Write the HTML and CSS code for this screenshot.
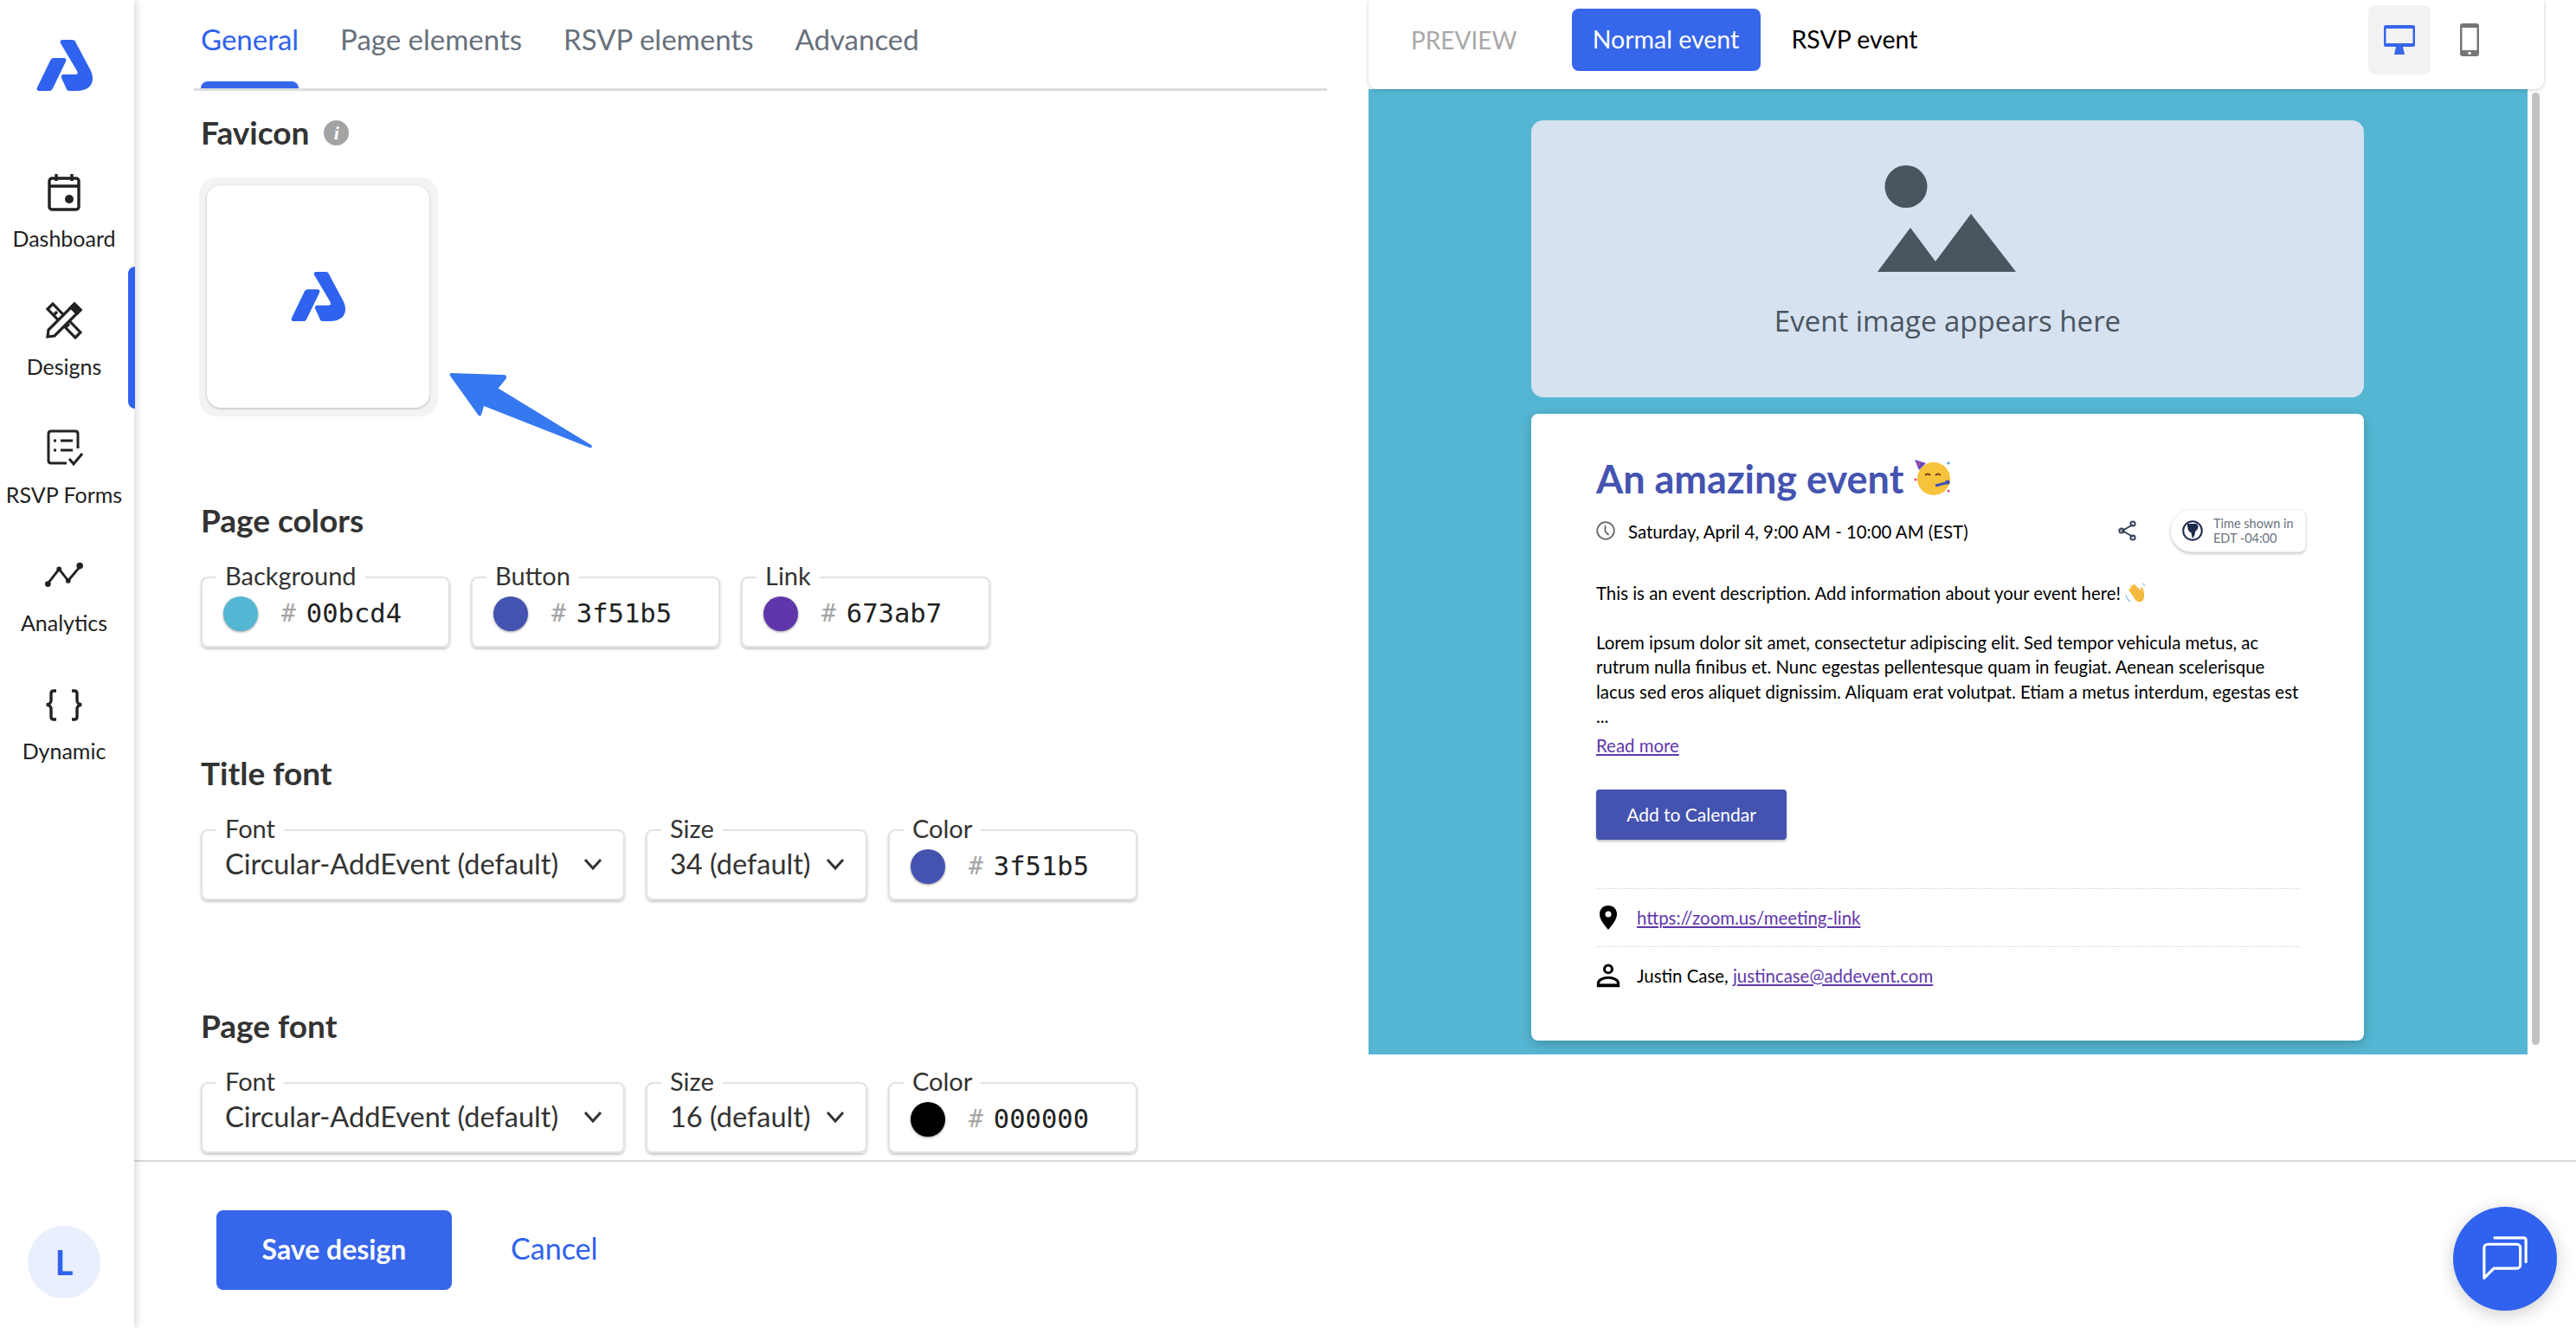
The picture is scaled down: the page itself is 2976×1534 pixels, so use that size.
FILE: index.html
```html
<!DOCTYPE html>
<html lang="en">
<head>
    <meta charset="UTF-8">
    <title>Designs</title>
    <link rel="stylesheet" href="styles.css">
</head>
<body>
    <svg class="defs" width="0" height="0">
        <symbol id="logo" viewBox="0 0 65 59">
            <path d="M20 21h11c3 0 4 1 3 4L19 56c-1 2-2 3-4 3H3c-2 0-3-2-2-4l15-31c1-2 2-3 4-3z"/>
            <path d="M31 0h10c3 0 4 1 5 4l16 30c2 4 3 7 3 11 0 9-8 14-18 14h-8c-3 0-4-1-5-4l-5-11c-1-2 0-4 3-4h13c3 0 3-2 2-4L28 4c-1-3 0-4 3-4z"/>
        </symbol>
    </svg>

    <div class="app">
        <aside class="sidebar">
            <svg class="logo"><use href="#logo"/></svg>
            <nav class="nav">
                <a class="nav-item">
                    <svg class="nav-icon" viewBox="0 0 44 44" fill="none" stroke="#222" stroke-width="3.4">
                        <rect x="5" y="6" width="34" height="36" rx="3"/>
                        <path d="M5 15h34M13 1v8M31 1v8"/>
                        <circle cx="28" cy="30" r="5" fill="#222" stroke="none"/>
                    </svg>
                    <span>Dashboard</span>
                </a>
                <a class="nav-item active">
                    <svg class="nav-icon" viewBox="0 0 44 44" fill="none" stroke="#222" stroke-width="3.2">
                        <path d="M3 9l6-6 32 33-6 6zM10 16l4-4M17 23l4-4M24 30l4-4"/>
                        <path d="M34 3l7 7-30 30-8 1 1-8zM30 7l7 7" fill="#fff"/>
                        <path d="M34 3l7 7-4 4-7-7z" fill="#222"/>
                    </svg>
                    <span>Designs</span>
                </a>
                <a class="nav-item">
                    <svg class="nav-icon" viewBox="0 0 44 44" fill="none" stroke="#222" stroke-width="3">
                        <path d="M38 22V5c0-2-1-3-3-3H7C5 2 4 3 4 5v31c0 2 1 3 3 3h18"/>
                        <path d="M18 13h14M18 24h14M10 13h3M10 24h3"/>
                        <path d="M28 34l5 6 10-12"/>
                    </svg>
                    <span>RSVP Forms</span>
                </a>
                <a class="nav-item">
                    <svg class="nav-icon" viewBox="0 0 46 44" fill="none" stroke="#222" stroke-width="3">
                        <path d="M3 31l14-18 11 14 15-18"/>
                        <g fill="#222" stroke="none">
                            <circle cx="3.5" cy="31" r="3.5"/><circle cx="17" cy="13" r="3"/>
                            <circle cx="28" cy="27" r="3"/><circle cx="42" cy="9" r="4"/>
                        </g>
                    </svg>
                    <span>Analytics</span>
                </a>
                <a class="nav-item">
                    <svg class="nav-icon" viewBox="0 0 44 44" fill="none" stroke="#222" stroke-width="3.4">
                        <path d="M13 6H10C8 6 7 7 7 9v8c0 3-1 4-5 5 4 1 5 2 5 5v9c0 2 1 3 3 3h3"/>
                        <path d="M31 6h3c2 0 3 1 3 3v8c0 3 1 4 5 5-4 1-5 2-5 5v9c0 2-1 3-3 3h-3"/>
                    </svg>
                    <span>Dynamic</span>
                </a>
            </nav>
            <div class="avatar">L</div>
        </aside>

        <main class="main">
            <div class="workspace">
                <section class="editor">
                    <div class="tabs">
                        <a class="tab active">General</a>
                        <a class="tab">Page elements</a>
                        <a class="tab">RSVP elements</a>
                        <a class="tab">Advanced</a>
                    </div>

                    <div class="fields">
                        <h3 class="heading first">Favicon <i class="info">i</i></h3>
                        <div class="favicon-wrap">
                            <div class="favicon-card">
                                <svg class="favicon-logo"><use href="#logo"/></svg>
                            </div>
                            <svg class="arrow" viewBox="0 0 170 90">
                                <path d="M3 1l62 2c3 0 3 3 2 5l-9 11 110 67c2 2 0 4-2 3L41 40l-3 10c-1 2-3 2-4 0L1 4C0 2 1 1 3 1z"/>
                            </svg>
                        </div>

                        <h3 class="heading colors">Page colors</h3>
                        <div class="row">
                            <fieldset class="box box-color">
                                <legend>Background</legend>
                                <div class="color"><span class="swatch swatch-teal"></span><span class="hash">#</span><span class="hex">00bcd4</span></div>
                            </fieldset>
                            <fieldset class="box box-color">
                                <legend>Button</legend>
                                <div class="color"><span class="swatch swatch-indigo"></span><span class="hash">#</span><span class="hex">3f51b5</span></div>
                            </fieldset>
                            <fieldset class="box box-color">
                                <legend>Link</legend>
                                <div class="color"><span class="swatch swatch-purple"></span><span class="hash">#</span><span class="hex">673ab7</span></div>
                            </fieldset>
                        </div>

                        <h3 class="heading">Title font</h3>
                        <div class="row">
                            <fieldset class="box box-font">
                                <legend>Font</legend>
                                <div class="select">Circular-AddEvent (default)<svg class="chevron" viewBox="0 0 22 14"><path d="M2 2l9 10 9-10"/></svg></div>
                            </fieldset>
                            <fieldset class="box box-size">
                                <legend>Size</legend>
                                <div class="select">34 (default)<svg class="chevron" viewBox="0 0 22 14"><path d="M2 2l9 10 9-10"/></svg></div>
                            </fieldset>
                            <fieldset class="box box-color">
                                <legend>Color</legend>
                                <div class="color"><span class="swatch swatch-indigo"></span><span class="hash">#</span><span class="hex">3f51b5</span></div>
                            </fieldset>
                        </div>

                        <h3 class="heading">Page font</h3>
                        <div class="row">
                            <fieldset class="box box-font">
                                <legend>Font</legend>
                                <div class="select">Circular-AddEvent (default)<svg class="chevron" viewBox="0 0 22 14"><path d="M2 2l9 10 9-10"/></svg></div>
                            </fieldset>
                            <fieldset class="box box-size">
                                <legend>Size</legend>
                                <div class="select">16 (default)<svg class="chevron" viewBox="0 0 22 14"><path d="M2 2l9 10 9-10"/></svg></div>
                            </fieldset>
                            <fieldset class="box box-color">
                                <legend>Color</legend>
                                <div class="color"><span class="swatch swatch-black"></span><span class="hash">#</span><span class="hex">000000</span></div>
                            </fieldset>
                        </div>
                    </div>
                </section>

                <section class="preview">
                    <header class="preview-bar">
                        <span class="preview-label">PREVIEW</span>
                        <button class="event-btn active">Normal event</button>
                        <button class="event-btn">RSVP event</button>
                        <div class="devices">
                            <span class="device active">
                                <svg viewBox="0 0 36 34" width="36" height="34">
                                    <path fill="#3666ea" d="M2 0h32c1 0 2 1 2 2v21c0 1-1 2-2 2H22l2 9H12l2-9H2c-1 0-2-1-2-2V2C0 1 1 0 2 0z"/>
                                    <rect x="2.500" y="4" width="31" height="17" fill="#f2f2f2"/>
                                </svg>
                            </span>
                            <span class="device">
                                <svg viewBox="0 0 22 38" width="22" height="38">
                                    <rect width="22" height="38" rx="3" fill="#757575"/>
                                    <rect x="2.500" y="5" width="17" height="26" fill="#fff"/>
                                    <circle cx="11" cy="34.500" r="1.800" fill="#fff"/>
                                </svg>
                            </span>
                        </div>
                    </header>
                    <div class="preview-body">
                        <div class="preview-scroll">
                            <div class="image-card">
                                <svg class="image-icon" viewBox="0 0 160 124">
                                    <circle cx="33" cy="24.500" r="24.500"/>
                                    <path d="M0 123L38 72l29 39 41-55 52 67z"/>
                                </svg>
                                <div class="image-text">Event image appears here</div>
                            </div>
                            <article class="event-card">
                                <h1 class="event-title">An amazing event
                                    <svg class="emoji-party" viewBox="0 0 44 42">
                                        <circle cx="24" cy="23" r="19" fill="#f7c23c"/>
                                        <path d="M2 1l13 4-8 8z" fill="#6a4bc4"/>
                                        <path d="M5 4l4 1-2 3z" fill="#e0457b"/>
                                        <path d="M14 19q3-3 6 0M26 19q3-3 6 0" fill="none" stroke="#6b3f1c" stroke-width="1.800"/>
                                        <path d="M26 31l12-3" stroke="#3f51b5" stroke-width="3"/>
                                        <circle cx="40" cy="27" r="2.600" fill="#3f51b5"/>
                                        <circle cx="3" cy="24" r="1.500" fill="#e0457b"/><circle cx="41" cy="5" r="1.500" fill="#3f9ae0"/>
                                        <circle cx="41" cy="37" r="1.500" fill="#e0457b"/>
                                    </svg>
                                </h1>
                                <div class="event-when">
                                    <svg class="clock" viewBox="0 0 22 22" fill="none" stroke="#666" stroke-width="1.800"><circle cx="11" cy="11" r="9.800"/><path d="M10.500 5v7l4 4"/></svg>
                                    <span class="when-text">Saturday, April 4, 9:00 AM - 10:00 AM (EST)</span>
                                    <svg class="share" viewBox="0 0 22 24" fill="none" stroke="#37415a" stroke-width="2"><path d="M17 5L5 12l12 7"/><circle cx="17" cy="4" r="2.600"/><circle cx="4" cy="12" r="2.600"/><circle cx="17" cy="20" r="2.600"/></svg>
                                    <div class="timezone">
                                        <svg class="globe" viewBox="0 0 24 24"><circle cx="12" cy="12" r="10.800" fill="#fff" stroke="#1d2a4d" stroke-width="2"/><path d="M6 4h11c3 4 1 7-2 9 0 3-1 6-3 8-1-3-1-6-2-7-3-1-4-5-4-10z" fill="#1d2a4d"/></svg>
                                        <div class="tz-text">Time shown in<br>EDT -04:00</div>
                                    </div>
                                </div>
                                <p class="event-desc">This is an event description. Add information about your event here!
                                    <svg class="emoji-wave" viewBox="0 0 24 24">
                                        <path d="M4 8l8 12c3 3 7 3 9 0 2-4 1-8 0-12l-2-4-1 5-8-8-1 3-3-1 1 3-3 2z" fill="#f5b93f"/>
                                        <path d="M1 14q1 5 5 8M20 1q2 1 3 3" fill="none" stroke="#9bc4e6" stroke-width="1.300"/>
                                    </svg>
                                </p>
                                <p class="event-desc lorem">Lorem ipsum dolor sit amet, consectetur adipiscing elit. Sed tempor vehicula metus, ac<br>rutrum nulla finibus et. Nunc egestas pellentesque quam in feugiat. Aenean scelerisque<br>lacus sed eros aliquet dignissim. Aliquam erat volutpat. Etiam a metus interdum, egestas est<br>...</p>
                                <a class="link read-more">Read more</a>
                                <button class="calendar-btn">Add to Calendar</button>
                                <div class="event-row first-row">
                                    <svg class="row-icon" viewBox="0 0 24 28"><path fill="#000" fill-rule="evenodd" d="M12 0c6 0 10 4 10 10 0 6-5 12-10 18C7 22 2 16 2 10 2 4 6 0 12 0zm0 6.500a3.500 3.500 0 100 7 3.500 3.500 0 000-7z"/></svg>
                                    <a class="link">https://zoom.us/meeting-link</a>
                                </div>
                                <div class="event-row">
                                    <svg class="row-icon" viewBox="0 0 24 24" fill="none" stroke="#000" stroke-width="2.600"><circle cx="12" cy="5.500" r="3.800"/><path d="M2 22v-2c0-4 5-6 10-6s10 2 10 6v2z"/><path d="M1 21.500h22" stroke-width="3"/></svg>
                                    <span>Justin Case, <a class="link">justincase@addevent.com</a></span>
                                </div>
                            </article>
                        </div>
                        <div class="scrollbar"><div class="thumb"></div></div>
                    </div>
                </section>
            </div>

            <footer class="footer">
                <button class="save-btn">Save design</button>
                <a class="cancel">Cancel</a>
            </footer>
        </main>
    </div>

    <button class="chat-btn">
        <svg viewBox="0 0 56 56" width="52" height="52" fill="none" stroke="#fff" stroke-width="3.400" stroke-linecap="round" stroke-linejoin="round">
            <path d="M15 2h36c2 0 3 1 3 3v27"/>
            <path d="M7 10h36c2 0 4 2 4 4v22c0 2-2 4-4 4H14L2 52V14c0-2 2-4 5-4z"/>
        </svg>
    </button>
</body>
</html>
```

FILE: styles.css
```css
* {
    box-sizing: border-box;
}
html, body {
    margin: 0;
    height: 100%;
}
body {
    width: 2976px;
    height: 1534px;
    overflow: hidden;
    background: #fff;
    font-family: 'Lato', 'Liberation Sans', sans-serif;
    color: #222;
}
button {
    font-family: inherit;
    border: none;
    cursor: pointer;
}
.defs {
    position: absolute;
}
.app {
    display: flex;
    height: 100%;
}

/* sidebar */
.sidebar {
    width: 155px;
    flex: none;
    display: flex;
    flex-direction: column;
    align-items: center;
    padding: 46px 7px 0 0;
    position: relative;
    z-index: 2;
    background: #fff;
    box-shadow: 3px 0 8px rgba(0, 0, 0, 0.14);
}
.logo {
    width: 65px;
    height: 59px;
    fill: #2f62ee;
    margin-bottom: 95px;
    flex: none;
}
.nav {
    width: 100%;
}
.nav-item {
    height: 148px;
    display: flex;
    flex-direction: column;
    align-items: center;
    font-size: 25px;
    line-height: 30px;
    color: #222;
    position: relative;
}
.nav-icon {
    width: 44px;
    height: 44px;
    margin-bottom: 16px;
}
.nav-item.active::after {
    content: "";
    position: absolute;
    right: -8px;
    top: -40px;
    width: 8px;
    height: 164px;
    background: #2f62ee;
    border-radius: 8px 0 0 8px;
}
.avatar {
    position: absolute;
    left: 32px;
    top: 1416px;
    width: 84px;
    height: 84px;
    border-radius: 50%;
    background: #e9effd;
    color: #2f62ee;
    font-size: 40px;
    font-weight: 700;
    line-height: 84px;
    text-align: center;
}

/* main area */
.main {
    flex: 1;
    display: flex;
    flex-direction: column;
}
.workspace {
    height: 1342px;
    display: flex;
    border-bottom: 2px solid #d8d8d8;
    overflow: hidden;
}
.editor {
    width: 1426px;
    flex: none;
}
.tabs {
    margin-left: 69px;
    width: 1309px;
    height: 105px;
    padding-left: 8px;
    display: flex;
    gap: 48px;
    border-bottom: 3px solid #dcdcdc;
}
.tab {
    position: relative;
    height: 102px;
    padding-top: 25px;
    font-size: 33px;
    line-height: 40px;
    color: #68707c;
}
.tab.active {
    color: #2f62ee;
}
.tab.active::after {
    content: "";
    position: absolute;
    left: 0;
    right: 0;
    bottom: 0;
    height: 8px;
    background: #3666ea;
    border-radius: 8px 8px 0 0;
}
.fields {
    padding-left: 77px;
}
.heading {
    margin: 125px 0 29px;
    font-size: 37px;
    line-height: 40px;
    font-weight: 700;
    color: #333;
}
.heading.first {
    margin: 28px 0 32px;
    display: flex;
    align-items: center;
    gap: 17px;
}
.heading.colors {
    margin-top: 100px;
}
.info {
    width: 29px;
    height: 29px;
    border-radius: 50%;
    background: #a3a3a3;
    color: #fff;
    font-family: 'Liberation Serif', serif;
    font-size: 22px;
    line-height: 29px;
    text-align: center;
}
.favicon-wrap {
    position: relative;
}
.favicon-card {
    width: 276px;
    height: 276px;
    margin-left: -2px;
    padding: 9px;
    background: #f3f3f3;
    border-radius: 20px;
}
.favicon-logo {
    display: block;
    width: 257px;
    height: 257px;
    padding: 99px 97px;
    fill: #2f62ee;
    background: #fff;
    border-radius: 16px;
    box-shadow: 0 1px 3px rgba(0, 0, 0, 0.25);
}
.arrow {
    position: absolute;
    left: 287px;
    top: 225px;
    width: 166px;
    height: 88px;
    fill: #3578f0;
}
.row {
    display: flex;
    gap: 24px;
}
.box {
    margin: 0;
    padding: 0 24px 12px;
    background: #fff;
    border: 2px solid #e2e2e2;
    border-radius: 8px;
    box-shadow: 0 2px 3px rgba(0, 0, 0, 0.22);
    min-width: 0;
}
.box legend {
    margin-left: -8px;
    padding: 0 10px 4px;
    font-size: 29px;
    line-height: 30px;
    color: #333;
}
.box-color {
    width: 288px;
}
.box-font {
    width: 490px;
}
.box-size {
    width: 256px;
}
.color,
.select {
    height: 50px;
    display: flex;
    align-items: center;
}
.color {
    padding-bottom: 1px;
}
.swatch {
    width: 40px;
    height: 40px;
    border-radius: 50%;
    box-shadow: 0 1px 3px rgba(0, 0, 0, 0.4);
    margin-right: 27px;
}
.swatch-teal {
    background: #54b6d2;
}
.swatch-indigo {
    background: #4453b0;
}
.swatch-purple {
    background: #5f37ab;
}
.swatch-black {
    background: #000;
}
.hash {
    font-family: 'DejaVu Sans Mono', monospace;
    font-size: 28px;
    color: #a5a5a5;
    margin-right: 12px;
}
.hex {
    font-family: 'DejaVu Sans Mono', monospace;
    font-size: 30.500px;
    color: #222;
}
.select {
    padding: 0 0 7px 2px;
    font-size: 32.500px;
    color: #333;
    justify-content: space-between;
}
.chevron {
    width: 22px;
    height: 14px;
    fill: none;
    stroke: #333;
    stroke-width: 3;
}

/* preview */
.preview {
    width: 1358px;
    flex: none;
}
.preview-bar {
    height: 103px;
    padding: 0 50px 11px 49px;
    display: flex;
    align-items: center;
    background: #fff;
    border-radius: 0 0 10px 10px;
    position: relative;
    z-index: 1;
    box-shadow: 0 1px 4px rgba(0, 0, 0, 0.2);
}
.preview-label {
    font-size: 28px;
    color: #a8a8a8;
    margin-right: 63px;
}
.event-btn {
    height: 72px;
    padding: 0 25px 3px;
    background: none;
    color: #000;
    font-size: 28.500px;
    border-radius: 8px;
    margin-right: 11px;
}
.event-btn.active {
    width: 218px;
    padding: 0 0 3px;
    background: #3666ea;
    color: #fff;
}
.devices {
    margin-left: auto;
    display: flex;
    gap: 9px;
}
.device {
    width: 72px;
    height: 80px;
    display: flex;
    align-items: center;
    justify-content: center;
    border-radius: 8px;
}
.device.active {
    background: #f2f2f2;
}
.preview-body {
    height: 1115px;
    display: flex;
}
.preview-scroll {
    flex: 1;
    padding: 36px 0 0 188px;
    background: #54b6d2;
    display: flex;
    flex-direction: column;
    align-items: flex-start;
}
.scrollbar {
    width: 19px;
    background: #fff;
    padding: 4px 5px 0;
}
.thumb {
    height: 1100px;
    background: #c1c1c1;
    border-radius: 5px;
}
.image-card {
    width: 962px;
    height: 320px;
    flex: none;
    padding-top: 52px;
    background: #d6e2f0;
    border-radius: 14px;
    text-align: center;
}
.image-icon {
    display: block;
    width: 160px;
    height: 124px;
    margin-left: 400px;
    fill: #4a5560;
}
.image-text {
    margin-top: 34px;
    font-family: 'Open Sans', sans-serif;
    font-size: 33px;
    font-weight: 500;
    line-height: 44px;
    color: #4a5560;
}
.event-card {
    width: 962px;
    margin-top: 19px;
    padding: 47px 74px 42px 75px;
    flex: none;
    background: #fff;
    border-radius: 8px;
    box-shadow: 0 4px 12px rgba(0, 0, 0, 0.2);
    font-size: 20.400px;
    color: #000;
}
.event-title {
    margin: 0;
    display: flex;
    align-items: center;
    gap: 11px;
    font-size: 45px;
    line-height: 56px;
    color: #4453b0;
}
.emoji-party {
    width: 44px;
    height: 42px;
    margin-top: -4px;
}
.event-when {
    margin-top: 7px;
    height: 50px;
    display: flex;
    align-items: center;
}
.clock {
    width: 22px;
    height: 22px;
    margin-right: 15px;
}
.when-text {
    padding-top: 2px;
}
.share {
    width: 22px;
    height: 24px;
    margin-left: auto;
    margin-right: 38px;
}
.timezone {
    width: 157px;
    height: 50px;
    margin-right: -7px;
    padding-left: 13px;
    display: flex;
    align-items: center;
    gap: 12px;
    background: #fff;
    border: 1px solid #eee;
    border-radius: 26px 8px 8px 26px;
    box-shadow: 0 2px 3px rgba(0, 0, 0, 0.2);
}
.globe {
    width: 24px;
    height: 24px;
    flex: none;
}
.tz-text {
    font-size: 14.500px;
    line-height: 17px;
    color: #6a7280;
    white-space: nowrap;
}
.event-desc {
    margin: 33px 0 0;
    line-height: 28.500px;
    white-space: nowrap;
}
.event-desc.lorem {
    margin-top: 28px;
}
.emoji-wave {
    width: 24px;
    height: 24px;
    vertical-align: -4px;
}
.link {
    color: #5f37ab;
    text-decoration: underline;
}
.read-more {
    display: block;
    margin-top: 6px;
    line-height: 26px;
}
.calendar-btn {
    display: block;
    width: 220px;
    height: 58px;
    margin: 38px 0 56px;
    padding-bottom: 2px;
    background: #4453b0;
    color: #fff;
    font-size: 21px;
    border-radius: 4px;
    box-shadow: 0 2px 3px rgba(0, 0, 0, 0.25);
}
.event-row {
    height: 67px;
    display: flex;
    align-items: center;
    gap: 19px;
    border-top: 1px dotted #cfcfcf;
}
.row-icon {
    width: 28px;
    height: 28px;
    flex: none;
}

/* footer */
.footer {
    flex: 1;
    padding: 56px 0 0 95px;
}
.save-btn {
    width: 272px;
    height: 92px;
    padding-bottom: 5px;
    background: #3666ea;
    color: #fff;
    font-size: 32px;
    font-weight: 700;
    border-radius: 8px;
}
.cancel {
    margin-left: 64px;
    font-size: 34px;
    color: #2f62ee;
}
.chat-btn {
    position: fixed;
    left: 2834px;
    top: 1394px;
    width: 120px;
    height: 120px;
    padding: 0;
    display: flex;
    align-items: center;
    justify-content: center;
    border-radius: 50%;
    background: #2f62ee;
    box-shadow: 0 4px 20px rgba(0, 0, 0, 0.2);
}
```
